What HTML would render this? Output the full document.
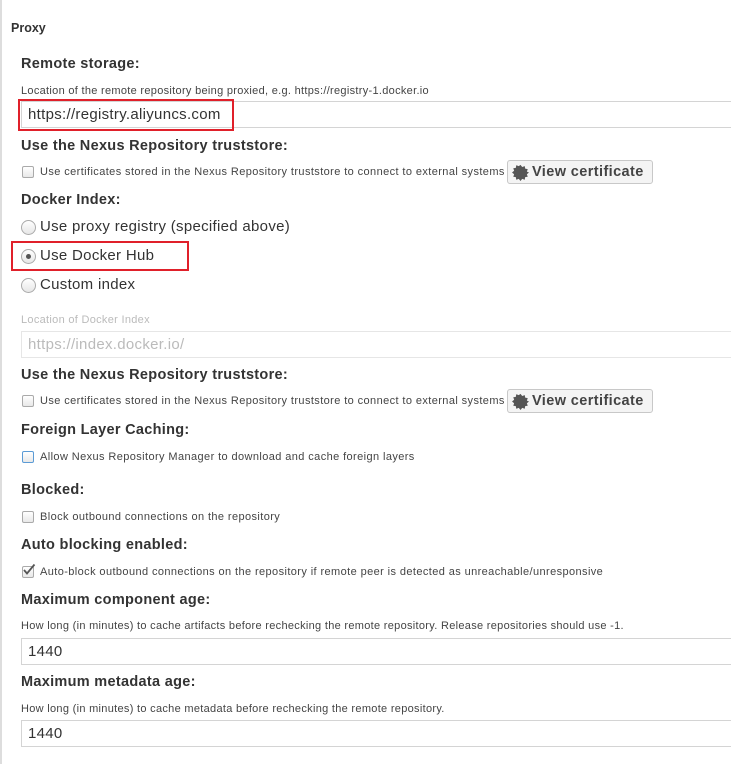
<!DOCTYPE html>
<html><head><meta charset="utf-8"><style>
body{margin:0;width:731px;height:764px;background:#fff;position:relative;overflow:hidden;font-family:"Liberation Sans",sans-serif;color:#333}
.a{position:absolute;white-space:nowrap}
.lb{position:absolute;left:0;top:0;width:2px;height:764px;background:#ddd}
.h{position:absolute;left:21px;font-weight:bold;font-size:14.5px;color:#333;line-height:16px;letter-spacing:0.3px;white-space:nowrap}
.help{position:absolute;left:21px;font-size:11px;letter-spacing:0.3px;color:#444;line-height:12px;white-space:nowrap}
.inp{position:absolute;left:21px;width:720px;height:25px;border:1px solid #d4d4d4;box-sizing:content-box;font-size:15px;letter-spacing:0.3px;line-height:25px;padding-left:6px;color:#333}
.cb{position:absolute;left:22px;width:10px;height:10px;border:1px solid #aaa;border-radius:2px;background:linear-gradient(#fff,#e8e8e8)}
.cl{position:absolute;left:40px;font-size:11px;letter-spacing:0.4px;line-height:12px;color:#444;white-space:nowrap}
.rd{position:absolute;left:21px;width:13px;height:13px;border:1px solid #aaa;border-radius:50%;background:linear-gradient(#fff,#e6e6e6)}
.rl{position:absolute;left:40px;font-size:15px;letter-spacing:0.3px;line-height:18px;color:#333;white-space:nowrap}
.btn{position:absolute;left:507px;width:144px;height:22px;border:1px solid #c8c8c8;border-radius:3px;background:#f4f4f4;font-weight:bold;font-size:14.5px;letter-spacing:0.4px;line-height:22px;color:#444;white-space:nowrap}
.btn svg{position:absolute;left:4px;top:3px}
.btn span{position:absolute;left:24px}
.red{position:absolute;border:2px solid #e0202a}
</style></head><body>
<div class="lb"></div>
<div class="a" style="left:11px;top:21px;font-weight:bold;font-size:12.5px;color:#333">Proxy</div>

<div class="h" style="top:56px">Remote storage:</div>
<div class="help" style="top:85px">Location of the remote repository being proxied, e.g. https://registry-1.docker.io</div>
<div class="inp" style="top:101px">https://registry.aliyuncs.com</div>
<div class="red" style="left:18px;top:99px;width:212px;height:28px"></div>

<div class="h" style="top:138px">Use the Nexus Repository truststore:</div>
<div class="cb" style="top:166px"></div>
<div class="cl" style="top:166px">Use certificates stored in the Nexus Repository truststore to connect to external systems</div>
<div class="btn" style="top:160px"><svg width="17" height="17" viewBox="0 0 20 20"><polygon fill="#555" points="10,1 12,3.5 15,2.5 15.5,5.5 18.5,6 17.5,9 20,10 17.5,12 18.5,15 15.5,15.5 15,18.5 12,17.5 10,20 8,17.5 5,18.5 4.5,15.5 1.5,15 2.5,12 0,10 2.5,8 1.5,5 4.5,4.5 5,1.5 8,2.5"/></svg><span>View certificate</span></div>

<div class="h" style="top:192px">Docker Index:</div>
<div class="rd" style="top:220px"></div><div class="rl" style="top:218px">Use proxy registry (specified above)</div>
<div class="rd" style="top:249px"></div><div class="a" style="left:26px;top:254px;width:5px;height:5px;border-radius:50%;background:#555"></div><div class="rl" style="top:247px">Use Docker Hub</div>
<div class="red" style="left:11px;top:241px;width:174px;height:26px"></div>
<div class="rd" style="top:278px"></div><div class="rl" style="top:276px">Custom index</div>

<div class="help" style="top:314px;color:#bbb">Location of Docker Index</div>
<div class="inp" style="top:331px;color:#bbb;border-color:#e6e6e6">https://index.docker.io/</div>

<div class="h" style="top:367px">Use the Nexus Repository truststore:</div>
<div class="cb" style="top:395px"></div>
<div class="cl" style="top:395px">Use certificates stored in the Nexus Repository truststore to connect to external systems</div>
<div class="btn" style="top:389px"><svg width="17" height="17" viewBox="0 0 20 20"><polygon fill="#555" points="10,1 12,3.5 15,2.5 15.5,5.5 18.5,6 17.5,9 20,10 17.5,12 18.5,15 15.5,15.5 15,18.5 12,17.5 10,20 8,17.5 5,18.5 4.5,15.5 1.5,15 2.5,12 0,10 2.5,8 1.5,5 4.5,4.5 5,1.5 8,2.5"/></svg><span>View certificate</span></div>

<div class="h" style="top:422px">Foreign Layer Caching:</div>
<div class="cb" style="top:451px;border-color:#5b9bd5"></div>
<div class="cl" style="top:451px">Allow Nexus Repository Manager to download and cache foreign layers</div>

<div class="h" style="top:482px">Blocked:</div>
<div class="cb" style="top:511px"></div>
<div class="cl" style="top:511px">Block outbound connections on the repository</div>

<div class="h" style="top:537px">Auto blocking enabled:</div>
<div class="cb" style="top:566px"></div>
<svg class="a" style="left:22px;top:563px" width="14" height="14" viewBox="0 0 14 14"><path d="M2 7 L5 10.5 L12.5 1.5" stroke="#555" stroke-width="1.8" fill="none"/></svg>
<div class="cl" style="top:566px">Auto-block outbound connections on the repository if remote peer is detected as unreachable/unresponsive</div>

<div class="h" style="top:592px">Maximum component age:</div>
<div class="help" style="top:620px">How long (in minutes) to cache artifacts before rechecking the remote repository. Release repositories should use -1.</div>
<div class="inp" style="top:638px">1440</div>

<div class="h" style="top:674px">Maximum metadata age:</div>
<div class="help" style="top:703px">How long (in minutes) to cache metadata before rechecking the remote repository.</div>
<div class="inp" style="top:720px">1440</div>
</body></html>
